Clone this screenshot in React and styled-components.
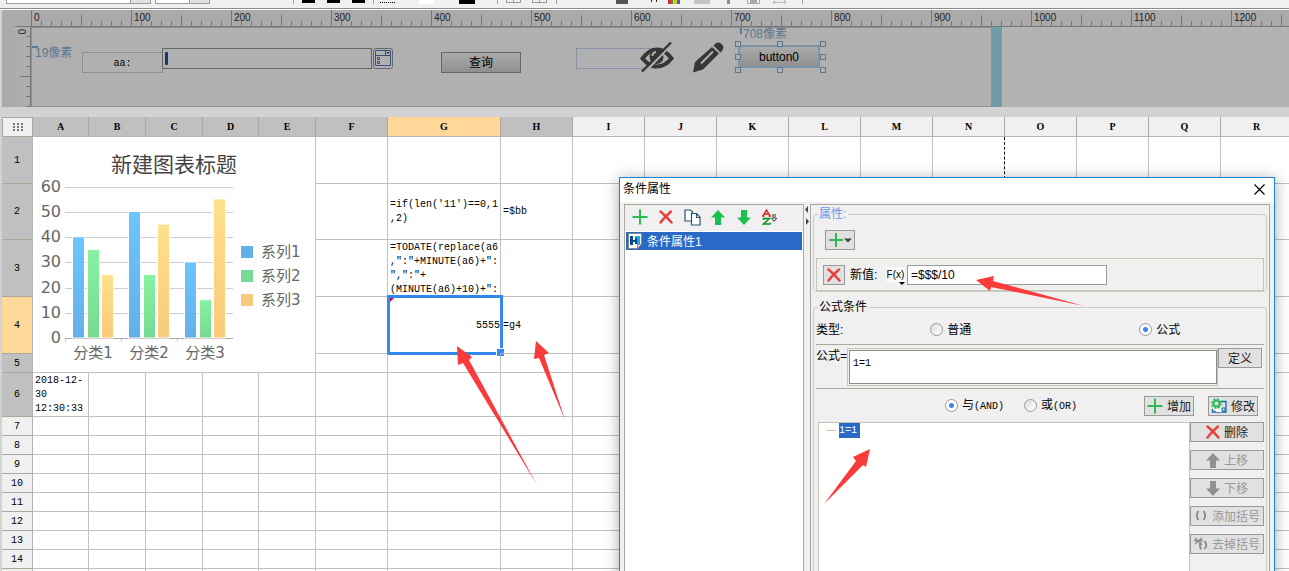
import React from "react";
import styled, { createGlobalStyle, css } from "styled-components";

const GlobalStyle = createGlobalStyle`
  * { box-sizing: border-box; }
  body {
    margin: 0;
    background: #d2d2d2;
    color: #000;
    font: 12px/16px "Liberation Sans", "Noto Sans CJK SC", sans-serif;
  }
  button, input, select, textarea { font: inherit; color: inherit; margin: 0; }
`;

const mono = css`
  font-family: "Liberation Mono", "Noto Sans CJK SC", monospace;
  font-size: 10px;
`;

const Page = styled.div`
  position: relative;
  display: flex;
  flex-direction: column;
  height: 100vh;
  overflow: hidden;
`;

/* ---------- top tool strip ---------- */

const ToolStrip = styled.header`
  display: flex;
  align-items: flex-end;
  height: 10px;
  overflow: hidden;
  padding: 0 6px 5px;
  background: #f0f0f0;
  border-bottom: 1px solid #fff;
  box-shadow: inset 0 -1px 0 #8c8c8c;
`;

const FontSelect = styled.select`
  flex: none;
  width: ${(p) => p.$w}px;
  height: 20px;
  margin-right: 4px;
  padding: 0 8px;
  border: 1px solid #9a9a9a;
  border-radius: 0;
  appearance: none;
  background: linear-gradient(90deg, #fff calc(100% - 20px), #9a9a9a calc(100% - 20px), #9a9a9a calc(100% - 19px), #e1e1e1 calc(100% - 19px));
`;

const ToolMark = styled.span`
  flex: none;
  width: ${(p) => p.$w}px;
  height: ${(p) => p.$h || 4}px;
  margin-left: ${(p) => p.$gap}px;
  background: ${(p) => p.$c};
`;

const toolMarks = [
  [79, 1, "#a0a0a0", 5], [8, 13, "linear-gradient(#000 3px,transparent 3px)", 4], [12, 13, "linear-gradient(#000 3px,transparent 3px)", 4],
  [12, 13, "linear-gradient(#000 3px,transparent 3px)", 4], [8, 1, "#a0a0a0", 5],
  [6, 16, "repeating-linear-gradient(90deg,#000 0 1px,transparent 1px 2px) 0 2px / 100% 1px no-repeat", 4], [23, 15, "#fff", 4],
  [25, 16, "#000", 4], [22, 1, "#a0a0a0", 5],
  [8, 15, "linear-gradient(#999,#999) 0 2px / 100% 1px no-repeat, linear-gradient(90deg,#999 1px,transparent 1px 7px,#999 7px 8px,transparent 8px 14px,#999 14px) 0 0 / 100% 3px no-repeat", 4],
  [11, 15, "linear-gradient(#999,#999) 0 2px / 100% 1px no-repeat, linear-gradient(90deg,#999 1px,transparent 1px 7px,#999 7px 8px,transparent 8px 14px,#999 14px) 0 0 / 100% 3px no-repeat", 4],
  [9, 1, "#a0a0a0", 5],
  [59, 12, "#555", 4], [23, 6, "linear-gradient(90deg,#222 1px,transparent 1px 5px,#222 5px) 0 0 / 100% 2px no-repeat", 4],
  [11, 12, "linear-gradient(90deg,#c33 3px,#3a9d3a 3px 5px,#f0c020 5px 9px,#3668b8 9px)", 5], [14, 16, "#c4c4c4", 4],
  [17, 3, "#888", 4],
  [17, 13, "linear-gradient(#aaa,#aaa) 0 3px / 100% 1px no-repeat, linear-gradient(90deg,#aaa 1px,transparent 1px 3px,#aaa 3px 10px,transparent 10px 12px,#aaa 12px)", 4],
  [12, 15, "linear-gradient(#bbb,#bbb) 0 2px / 100% 1px no-repeat, linear-gradient(90deg,transparent 2px,#bbb 2px 3px,transparent 3px 12px,#bbb 12px 13px,transparent 13px)", 4],
  [15, 1, "#a0a0a0", 5],
];

/* ---------- parameter pane ---------- */

const ParamPane = styled.section`
  display: grid;
  grid-template: 17px 80px / 29px 1fr;
  flex: none;
  margin-left: 2px;
  background: #aaaaaa;
`;

const Ruler = styled.div`
  grid-column: 2;
  display: flex;
  overflow: hidden;
  border-bottom: 1px solid #777;
  background:
    repeating-linear-gradient(90deg, #777 0 1px, transparent 1px 100px) 0 0 / 100% 100% no-repeat,
    repeating-linear-gradient(90deg, transparent 0 50px, #777 50px 51px, transparent 51px 100px) 0 5px / 100% 12px no-repeat,
    repeating-linear-gradient(90deg, #777 0 1px, transparent 1px 10px) 0 11px / 100% 6px no-repeat;
`;

const RulerLabel = styled.span`
  flex: 0 0 100px;
  padding-left: 3px;
  font: 10px/15px "Liberation Sans", sans-serif;
  color: #222;
`;

const SideRuler = styled.div`
  margin-left: 13px;
  padding: 2px 0 0 4px;
  border-right: 1px solid #777;
  border-top: 1px solid #777;
  margin-top: -1px;
  background:
    repeating-linear-gradient(180deg, transparent 0 49px, #777 49px 50px, transparent 50px 100px) 5px 0 / 12px 100% no-repeat,
    repeating-linear-gradient(180deg, transparent 0 9px, #777 9px 10px) 11px 0 / 6px 100% no-repeat,
    #adadad;
  span {
    display: block;
    width: 8px;
    writing-mode: vertical-rl;
    transform: rotate(180deg);
    font: 10px/8px "Liberation Sans", sans-serif;
    color: #222;
  }
`;

const DesignArea = styled.div`
  display: flex;
  min-width: 0;
  background: #b2b2b2;
`;

const DesignCanvas = styled.div`
  position: relative;
  flex: 0 0 960px;
  background: #b0b0b0;
  border: solid #8f8f8f;
  border-width: 1px 0 1px 1px;
`;

const ResizeBar = styled.div`
  width: 11px;
  background: #6f9ca9;
`;

/* A widget dropped on the free design canvas. */
const placed = css`
  position: absolute;
  left: ${(p) => p.$x}px;
  top: ${(p) => p.$y}px;
  width: ${(p) => p.$w}px;
  height: ${(p) => p.$h}px;
`;

const WidgetLabel = styled.label`
  ${placed}
  ${mono}
  border: 1px solid #8f8f8f;
  line-height: 22px;
  text-align: center;
`;

const WidgetInput = styled.input`
  ${placed}
  padding: 0 4px;
  border: 1px solid ${(p) => p.$line || "#666"};
  background: transparent;
`;

const Caret = styled.i`
  ${placed}
  background: #123a66;
  border-radius: 1px;
`;

const WidgetButton = styled.button`
  ${placed}
  padding: 0;
  border: ${(p) => (p.$selected ? "2px solid #7d94a8" : "1px solid #666")};
  background: linear-gradient(#aaa, #909090);
`;

const WidgetIcon = styled.svg`
  ${placed}
`;

const Distance = styled.span`
  ${placed}
  color: #5c7790;
  line-height: 14px;
  white-space: nowrap;
`;

const Handle = styled.i`
  ${placed}
  border: 1px solid #5c7790;
  background: #b0b0b0;
`;

/* ---------- sheet ---------- */

const SheetWrap = styled.main`
  flex: 1;
  min-height: 0;
  overflow: hidden;
  margin: 10px 0 0 2px;
  background: #fff;
`;

const Sheet = styled.table`
  table-layout: fixed;
  width: 1291px;
  border-collapse: separate;
  border-spacing: 0;
  ${mono}
  line-height: 14px;
`;

const ColHead = styled.th`
  height: 20px;
  padding: 1px 0 0;
  font-family: "Liberation Serif", serif;
  font-weight: 700;
  border-bottom: 1px solid #b5b5b5;
  border-right: 1px solid #aaa898;
  background: ${(p) => (p.$state === "active" ? "#ffd799" : p.$state === "on" ? "#c0c0c0" : "#f0f0f0")};
`;

const Corner = styled(ColHead)`
  padding: 0;
  border: 1px solid #aaa898;
  svg { display: block; margin: 0 auto; }
`;

const RowHead = styled(ColHead)`
  height: ${(p) => p.$h}px;
  font-family: "Liberation Mono", monospace;
  font-weight: 400;
  border-bottom-color: #aaa898;
  border-right-color: #b5b5b5;
`;

const Cell = styled.td`
  position: relative;
  padding: ${(p) => (p.$chart ? 0 : "1px 0 0 2px")};
  vertical-align: ${(p) => (p.$chart ? "top" : "middle")};
  border-right: 1px ${(p) => (p.$pageBreak ? "dashed #000" : "solid #c0c0c0")};
  border-bottom: 1px solid #c0c0c0;
  text-align: ${(p) => p.$align || "left"};
  white-space: pre;
`;

const Clip = styled.div`
  max-height: ${(p) => p.$h}px;
  overflow: hidden;
`;

const Selection = styled.div`
  position: absolute;
  inset: -2px -3px -2px -1px;
  border: 3px solid #3388f0;
  pointer-events: none;
  &::before {
    content: "";
    position: absolute;
    left: 0;
    top: 0;
    border: 2px solid #e0003c;
    border-right-color: transparent;
    border-bottom-color: transparent;
  }
  &::after {
    content: "";
    position: absolute;
    right: -5px;
    bottom: -5px;
    width: 7px;
    height: 7px;
    background: #3388f0;
    border: 1px solid #fff;
  }
`;

const cols = [
  ["A", 56], ["B", 57], ["C", 57], ["D", 56], ["E", 57], ["F", 72], ["G", 113], ["H", 72], ["I", 72],
  ["J", 72], ["K", 72], ["L", 72], ["M", 72], ["N", 72], ["O", 72], ["P", 72], ["Q", 72], ["R", 72],
];
const rows = [47, 56, 57, 57, 19, 44, 19, 19, 19, 19, 19, 19, 19, 19, 19];

const contents = {
  G2: "=if(len('11')==0,1\n,2)",
  H2: "=$bb",
  G3: "=TODATE(replace(a6\n,\":\"+MINUTE(a6)+\":\n\",\":\"+\n(MINUTE(a6)+10)+\":",
  G4: "5555",
  H4: "=g4",
  A6: "2018-12-\n30\n12:30:33",
};

/* ---------- chart ---------- */

const series = [
  { name: "系列1", from: "#6ec4ff", to: "#62b0ea", values: [40, 50, 30], dx: 40 },
  { name: "系列2", from: "#86f2a0", to: "#76da92", values: [35, 25, 15], dx: 55 },
  { name: "系列3", from: "#ffe08c", to: "#f8ca7c", values: [25, 45, 55], dx: 69 },
];
const yOf = (v) => 201 - v * 2.52;

const ChartSvg = styled.svg`
  display: block;
  font-family: "DejaVu Sans", "Noto Sans CJK SC", sans-serif;
  fill: #666;
`;

function Chart() {
  return (
    <ChartSvg width="282" height="235" viewBox="0 0 282 235">
      <defs>
        {series.map((s, i) => (
          <linearGradient id={`bar${i}`} key={i} x1="0" x2="0" y1="0" y2="1">
            <stop offset="0" stopColor={s.from} />
            <stop offset="1" stopColor={s.to} />
          </linearGradient>
        ))}
      </defs>
      <text x="141" y="35" fontSize="21" textAnchor="middle" fill="#444">新建图表标题</text>
      {[0, 10, 20, 30, 40, 50, 60].map((v) => (
        <g key={v}>
          <path d={`M32 ${Math.round(yOf(v)) + 0.5}H200`} stroke={v ? "#cfcfcf" : "#aaa"} />
          <text x="28" y={Math.round(yOf(v)) + 5} fontSize="16" textAnchor="end">{v}</text>
        </g>
      ))}
      <path d="M32.5 202v3M88.5 202v3M144.5 202v3" stroke="#ccc" />
      {series.map((s, i) =>
        s.values.map((v, k) => (
          <rect key={`${i}${k}`} x={s.dx + k * 56 - 0.5} y={yOf(v) - 0.5} width="12" height={v * 2.52 + 0.5} fill={`url(#bar${i})`} stroke="#fff" />
        ))
      )}
      {["分类1", "分类2", "分类3"].map((t, i) => (
        <text key={t} x={60 + i * 56} y="221" fontSize="15" textAnchor="middle">{t}</text>
      ))}
      {series.map((s, i) => (
        <g key={s.name}>
          <rect x="208" y={109 + i * 24} width="12" height="12" fill={s.to} />
          <text x="228" y={120 + i * 24} fontSize="15">{s.name}</text>
        </g>
      ))}
    </ChartSvg>
  );
}

/* ---------- dialog ---------- */

const Dialog = styled.section`
  position: absolute;
  left: 619px;
  top: 177px;
  bottom: -20px;
  width: 656px;
  display: flex;
  flex-direction: column;
  background: #f0f0f0;
  border: 1px solid #1883d7;
  box-shadow: 0 2px 14px rgba(0, 0, 0, 0.35);
`;

const TitleBar = styled.div`
  display: flex;
  justify-content: space-between;
  align-items: center;
  flex: none;
  height: 24px;
  padding: 0 4px 2px 3px;
  background: #fff;
`;

const IconButton = styled.button`
  display: grid;
  place-items: center;
  flex: none;
  width: 22px;
  height: 20px;
  padding: 0;
  border: ${(p) => (p.$framed ? "1px solid #999" : "0")};
  background: ${(p) => (p.$framed ? "#e1e1e1" : "none")};
`;

const DialogBody = styled.div`
  display: grid;
  grid-template-columns: 180px 6px 1fr;
  flex: 1;
  min-height: 0;
  padding: 2px 4px 0;
`;

const ListPanel = styled.div`
  display: flex;
  flex-direction: column;
  border: 1px solid #aca899;
`;

const ListTools = styled.div`
  display: flex;
  gap: 4px;
  height: 26px;
  align-items: center;
  padding: 0 0 2px 4px;
`;

const List = styled.ul`
  flex: 1;
  margin: 0;
  padding: 1px;
  list-style: none;
  background: #fff;
`;

const ListItem = styled.li`
  display: flex;
  align-items: center;
  gap: 5px;
  height: 18px;
  padding-left: 2px;
  color: #fff;
  background: #2a6ac6;
  span { padding-top: 2px; }
`;

const Splitter = styled.div`
  padding-top: 2px;
`;

const EditPanel = styled.div`
  display: flex;
  flex-direction: column;
  min-width: 0;
  border: 1px solid #aca899;
  border-bottom: 0;
  padding: 1px 2px 0;
`;

const Group = styled.fieldset`
  min-width: 0;
  margin: 0;
  border: 1px solid #ccc;
  border-radius: 4px;
  padding: 0 2px;
`;

const Legend = styled.legend`
  padding: 0 2px 0 1px;
  margin-left: 2px;
  height: 16px;
  color: ${(p) => p.$c || "#000"};
`;

const AddButton = styled(IconButton)`
  width: 30px;
  margin: 8px 0 8px 9px;
`;

const ValueRow = styled.div`
  display: flex;
  align-items: center;
  height: 33px;
  padding-left: 6px;
  border: 1px solid #c8c4b4;
`;

const FxButton = styled.button`
  position: relative;
  flex: none;
  width: 19px;
  height: 15px;
  margin-left: 8px;
  margin-right: 2px;
  padding: 0;
  border: 0;
  background: #fafafa;
  font-size: 10px;
  line-height: 12px;
  &::after {
    content: "";
    position: absolute;
    right: 0;
    bottom: -3px;
    border: 3px solid transparent;
    border-top-color: #000;
    border-bottom: 0;
  }
`;

const ValueLabel = styled.label`
  flex: none;
  margin-left: 5px;
  width: 28px;
  white-space: nowrap;
`;

const ValueInput = styled.input`
  width: 200px;
  height: 20px;
  padding: 0 3px;
  border: 1px solid #999;
  background: #fff;
`;

const FormRow = styled.div`
  display: flex;
  flex: none;
  height: ${(p) => p.$h}px;
  align-items: ${(p) => p.$align || "center"};
  padding: ${(p) => p.$pad || 0};
  border-bottom: ${(p) => (p.$rule ? "1px solid #aaa79c" : "0")};
`;

const RadioLabel = styled.label`
  display: flex;
  align-items: center;
  gap: 4px;
  margin-left: ${(p) => p.$gap}px;
  white-space: nowrap;
`;

const Radio = styled.input.attrs({ type: "radio" })`
  appearance: none;
  width: 13px;
  height: 13px;
  border: 1px solid #999;
  border-radius: 50%;
  background: linear-gradient(135deg, #ddd, #fff);
  &:checked {
    background: radial-gradient(circle, #3b86ee 0 2px, #fff 3px);
  }
`;

const Mono = styled.span`
  ${mono}
`;

const FormulaFrame = styled.div`
  flex: 1;
  display: flex;
  border: 1px solid #c8c4b4;
  padding: 1px 0 1px 1px;
`;

const FormulaText = styled.textarea`
  flex: 1;
  height: 34px;
  padding: 5px 3px;
  border: 1px solid #8c8c8c;
  resize: none;
  overflow: hidden;
  background: #fff;
  && { ${mono} }
`;

const Action = styled.button`
  display: flex;
  align-items: center;
  justify-content: center;
  gap: 4px;
  flex: none;
  width: ${(p) => p.$w}px;
  height: 20px;
  padding: 0;
  border: 1px solid #999;
  background: #e1e1e1;
  color: #222;
  white-space: nowrap;
  span { padding-top: 2px; }
  &:disabled { color: #999; }
`;

const AndRowActions = styled.div`
  display: flex;
  gap: 14px;
  margin-left: auto;
  margin-right: 6px;
`;

const TreeArea = styled.div`
  display: flex;
  flex: 1;
  min-height: 160px;
  padding-left: 2px;
`;

const Tree = styled.ul`
  flex: 1;
  margin: 0;
  padding: 0 0 0 7px;
  list-style: none;
  border: 1px solid #c8c4b4;
  background: #fff;
`;

const TreeItem = styled.li`
  display: flex;
  align-items: center;
  gap: 3px;
  &::before {
    content: "";
    width: 10px;
    height: 1px;
    background: #c8c4b4;
  }
  span {
    ${mono}
    width: 21px;
    height: 15px;
    line-height: 16px;
    color: #fff;
    background: #2a6ac6;
  }
`;

const SideActions = styled.div`
  display: flex;
  flex-direction: column;
  gap: 8px;
`;

const BottomGroup = styled(Group)`
  flex: 1;
  display: flex;
  flex-direction: column;
  margin-top: 7px;
  border-bottom: 0;
`;

/* ---------- icons ---------- */

const Plus = () => (
  <svg width="16" height="16" viewBox="0 0 16 16"><path d="M8 .5v15M.5 8h15" stroke="#2dba56" strokeWidth="2" /></svg>
);
const Cross = () => (
  <svg width="14" height="14" viewBox="0 0 14 14"><path d="M1.500 1.500Q7 6 12.500 12.500M12 1.500Q6 6.500 1.500 12.500" stroke="#e8403c" strokeWidth="2.400" fill="none" strokeLinecap="round" /></svg>
);
const Arrow = ({ down, c = "#19c24e" }) => (
  <svg width="14" height="15" viewBox="0 0 14 15">
    <path transform={down ? "rotate(180 7 7.5)" : undefined} d="M7 0L14 7.500H10V15H4V7.500H0Z" fill={c} />
  </svg>
);
const Copy = () => (
  <svg width="17" height="17" viewBox="0 0 17 17" fill="#fff" stroke="#2b556e" strokeWidth="1.200">
    <path d="M1 1H6.500L8.500 3V12H1Z" />
    <path d="M7.500 4.500H12.500L16 8V16H7.500Z" /><path d="M12.500 4.500V8.500H16" fill="none" />
  </svg>
);
const Sort = () => (
  <svg width="16" height="16" viewBox="0 0 16 16" fill="none">
    <path d="M1 7L4.500 1L8 7M2.500 5H6.500M0 7H2.500M6.500 7H9" stroke="#e02020" strokeWidth="1.400" />
    <path d="M1.500 11V9.500H7.500L1.500 15H8V13.500" stroke="#12941c" strokeWidth="1.500" />
    <path d="M11 5V10M13 5V10M9.500 9L12 12.500L15 9" stroke="#333" />
  </svg>
);
const Doc = () => (
  <svg width="14" height="16" viewBox="0 0 14 16">
    <path d="M.5 .5H13.500V11.500L9.500 15.500H.5Z" fill="#fff" stroke="#888" />
    <path d="M7 3H12V11H7Z" fill="#22a7e0" />
    <path d="M2 3H5V7H7V5H9V11H7V9H5V12H2Z" fill="#0a4a90" />
    <path d="M9.500 15.500V11.500H13.500Z" fill="#ddd" stroke="#888" />
  </svg>
);
const Modify = () => (
  <svg width="16" height="15" viewBox="0 0 16 15" fill="none">
    <path d="M10 3.500H15V14H1.500V11" stroke="#1769ae" strokeWidth="1.300" /><path d="M5 11H11V14H5Z" fill="#fff" />
    <circle cx="5.500" cy="5.500" r="3" stroke="#2dba56" strokeWidth="2" /><circle cx="5.500" cy="5.500" r="4.500" stroke="#2dba56" strokeWidth="1.600" strokeDasharray="1.800 1.740" />
    <path d="M11 10H14V13H11Z" stroke="#1769ae" />
  </svg>
);
const Parens = ({ x }) => (
  <svg width="14" height="14" viewBox="0 0 14 14" fill="none" stroke="#888" strokeWidth="1.800">
    <path d={x ? "M7 5Q4.500 9 7.500 12.500M10.500 4Q14 8 10.500 12" : "M4.500 2Q1 6.500 4.500 11M9.500 2Q13 6.500 9.500 11"} />
    {x && <path d="M1 1L8 8M8 1L1 7M0 3.500H9" strokeWidth="1.300" />}
  </svg>
);
const Close = () => (
  <svg width="11" height="11" viewBox="0 0 11 11"><path d="M.5 .5L10.500 10.500M10.500 .5L.5 10.500" stroke="#000" strokeWidth="1.200" /></svg>
);

const Pointers = styled.svg`
  position: absolute;
  left: 0;
  top: 0;
  pointer-events: none;
`;

const handles = [[704, 14], [746, 14], [789, 14], [704, 27], [789, 27], [704, 40], [746, 40], [789, 40]];

function cellFor(ri, ci) {
  const id = cols[ci][0] + (ri + 1);
  if (ri < 5 && ci < 5) {
    return ri === 0 && ci === 0 ? (
      <Cell key={id} colSpan={5} rowSpan={5} $chart><Chart /></Cell>
    ) : null;
  }
  const text = contents[id];
  return (
    <Cell key={id} $pageBreak={cols[ci][0] === "N"} $align={id === "G4" ? "right" : "left"}>
      {text && <Clip $h={rows[ri] - 2}>{text}</Clip>}
      {id === "G4" && <Selection />}
    </Cell>
  );
}

export default function App() {
  return (
    <Page>
      <GlobalStyle />
      <ToolStrip>
        <FontSelect $w={145} aria-label="字体"><option>宋体</option></FontSelect>
        <FontSelect $w={55} aria-label="字号"><option>9</option></FontSelect>
        {toolMarks.map(([gap, w, c, h], i) => <ToolMark key={i} $gap={gap} $w={w} $c={c} $h={h} />)}
      </ToolStrip>

      <ParamPane>
        <Ruler>
          {Array.from({ length: 13 }, (_, i) => <RulerLabel key={i}>{i * 100}</RulerLabel>)}
        </Ruler>
        <SideRuler><span>0</span></SideRuler>
        <DesignArea>
          <DesignCanvas>
            <Distance $x={3} $y={18} $w={40} $h={14}>19像素</Distance>
            <Handle $x={0} $y={18} $w={6} $h={1} />
            <WidgetLabel htmlFor="aa" $x={50} $y={24} $w={81} $h={21}>aa:</WidgetLabel>
            <WidgetInput id="aa" $x={130} $y={20} $w={210} $h={21} />
            <Caret $x={133} $y={24} $w={3} $h={13} />
            <WidgetIcon $x={341} $y={20} $w={20} $h={21} viewBox="0 0 20 21" fill="none">
              <rect x=".5" y=".5" width="19" height="20" rx="2" stroke="#666" />
              <path d="M2.500 2.500H17.500V17.500H2.500ZM2.500 7.500H17.500M12.500 2.500V7.500M4.500 9.500H6.500V11.500H4.500ZM4.500 13.500H6.500V15.500H4.500Z" stroke="#35517a" />
              <path d="M13.500 4H16.500L15 6Z" fill="#0b2050" />
            </WidgetIcon>
            <WidgetButton $x={409} $y={24} $w={80} $h={21}>查询</WidgetButton>
            <WidgetInput aria-label="password" $x={544} $y={20} $w={80} $h={21} $line="#8a93a5" />
            <WidgetIcon $x={608} $y={14} $w={34} $h={30} viewBox="0 0 34 30" fill="none" stroke="#3a3535">
              <path d="M2.500 16.500Q9 7.500 17 7.500T31.500 16.500Q25 24.500 17 24.500T2.500 16.500Z" strokeWidth="4" />
              <circle cx="16.500" cy="15" r="7" fill="#3a3535" stroke="none" />
              <path d="M12.500 14Q12.500 10.500 16 10" stroke="#b0b0b0" strokeWidth="2" />
              <path d="M5 30L32 2" stroke="#b0b0b0" strokeWidth="2.200" />
              <path d="M2 29.500L31 .5" strokeWidth="2.400" />
            </WidgetIcon>
            <WidgetIcon $x={660} $y={14} $w={32} $h={31} viewBox="0 0 32 31" fill="#3a3535">
              <path d="M3 20L20 5L27 11.500L11 27.500L1 30.500Z" />
              <path d="M21.500 3.500Q25-1 29 1.500T30 9L28.500 10.500Z" />
              <path d="M9 21.500L21 9.500" stroke="#b0b0b0" strokeWidth="2" />
            </WidgetIcon>
            <Distance $x={711} $y={-1} $w={46} $h={14}>708像素</Distance>
            <Handle $x={708} $y={0} $w={1} $h={6} />
            <WidgetButton $selected $x={706} $y={17} $w={82} $h={23}>button0</WidgetButton>
            {handles.map(([x, y], i) => <Handle key={i} $x={x - 1} $y={y - 1} $w={6} $h={6} />)}
          </DesignCanvas>
          <ResizeBar />
        </DesignArea>
      </ParamPane>

      <SheetWrap>
        <Sheet>
          <colgroup>
            <col width="31" />
            {cols.map(([n, w]) => <col key={n} width={w} />)}
          </colgroup>
          <thead>
            <tr>
              <Corner>
                <svg width="10" height="8" viewBox="0 0 10 8" fill="#777">
                  {[0, 4, 8].map((x) => [0, 3, 6].map((y) => <rect key={`${x}${y}`} x={x} y={y} width="2" height="2" />))}
                </svg>
              </Corner>
              {cols.map(([n], i) => <ColHead key={n} $state={n === "G" ? "active" : i < 8 ? "on" : ""}>{n}</ColHead>)}
            </tr>
          </thead>
          <tbody>
            {rows.map((h, ri) => (
              <tr key={ri}>
                <RowHead $h={h} $state={ri === 3 ? "active" : ri < 6 ? "on" : ""}>{ri < 14 ? ri + 1 : ""}</RowHead>
                {cols.map((_, ci) => cellFor(ri, ci))}
              </tr>
            ))}
          </tbody>
        </Sheet>
      </SheetWrap>

      <Dialog role="dialog" aria-labelledby="dlg-title">
        <TitleBar>
          <span id="dlg-title">条件属性</span>
          <IconButton aria-label="关闭"><Close /></IconButton>
        </TitleBar>
        <DialogBody>
          <ListPanel>
            <ListTools>
              <IconButton aria-label="添加"><Plus /></IconButton>
              <IconButton aria-label="删除"><Cross /></IconButton>
              <IconButton aria-label="复制"><Copy /></IconButton>
              <IconButton aria-label="上移"><Arrow /></IconButton>
              <IconButton aria-label="下移"><Arrow down /></IconButton>
              <IconButton aria-label="排序"><Sort /></IconButton>
            </ListTools>
            <List><ListItem><Doc /><span>条件属性1</span></ListItem></List>
          </ListPanel>
          <Splitter>
            <svg width="6" height="20" viewBox="0 0 6 20" fill="#444"><path d="M4 0V7L1 3.500ZM2 12V19L5 15.500Z" /></svg>
          </Splitter>
          <EditPanel>
            <Group>
              <Legend $c="#6c98ea">属性:</Legend>
              <AddButton $framed aria-label="添加属性">
                <svg width="24" height="16" viewBox="0 0 24 16"><path d="M8 1v14M1 8h14" stroke="#2dba56" strokeWidth="2" /><path d="M16 6.500H24L20 10.500Z" fill="#444" /></svg>
              </AddButton>
              <ValueRow>
                <IconButton $framed aria-label="移除"><Cross /></IconButton>
                <ValueLabel htmlFor="newval">新值:</ValueLabel>
                <FxButton>F(x)</FxButton>
                <ValueInput id="newval" defaultValue="=$$$/10" />
              </ValueRow>
            </Group>
            <BottomGroup>
              <Legend>公式条件</Legend>
              <FormRow $h={30} $rule>
                <span>类型:</span>
                <RadioLabel $gap={87}><Radio name="type" />普通</RadioLabel>
                <RadioLabel $gap={168}><Radio name="type" defaultChecked />公式</RadioLabel>
              </FormRow>
              <FormRow $h={44} $rule $align="flex-start" $pad="3px 2px 3px 0">
                <label htmlFor="formula">公式=</label>
                <FormulaFrame><FormulaText id="formula" defaultValue="1=1" /></FormulaFrame>
                <Action $w={44}><span>定义</span></Action>
              </FormRow>
              <FormRow $h={33}>
                <RadioLabel $gap={129}><Radio name="join" defaultChecked /><span>与<Mono>(AND)</Mono></span></RadioLabel>
                <RadioLabel $gap={20}><Radio name="join" /><span>或<Mono>(OR)</Mono></span></RadioLabel>
                <AndRowActions>
                  <Action $w={50}><Plus /><span>增加</span></Action>
                  <Action $w={50}><Modify /><span>修改</span></Action>
                </AndRowActions>
              </FormRow>
              <TreeArea>
                <Tree><TreeItem><span>1=1</span></TreeItem></Tree>
                <SideActions>
                  <Action $w={74}><Cross /><span>删除</span></Action>
                  <Action $w={74} disabled><Arrow c="#909090" /><span>上移</span></Action>
                  <Action $w={74} disabled><Arrow down c="#909090" /><span>下移</span></Action>
                  <Action $w={74} disabled><Parens /><span>添加括号</span></Action>
                  <Action $w={74} disabled><Parens x /><span>去掉括号</span></Action>
                </SideActions>
              </TreeArea>
            </BottomGroup>
          </EditPanel>
        </DialogBody>
      </Dialog>

      <Pointers width="1100" height="520" viewBox="0 0 1100 520" fill="#fb3b3b" aria-hidden="true">
        <path d="M457 346L472 357L469 360L537 485L463 363L458 365Z" />
        <path d="M536 341L549 353L544 355L565 420L539 358L534 359Z" />
        <path d="M976 280L994 276L993 281L1084 306L991 287L990 291Z" />
        <path d="M870 449L853 457L856 461L824 504L863 465L866 467Z" />
      </Pointers>
    </Page>
  );
}
